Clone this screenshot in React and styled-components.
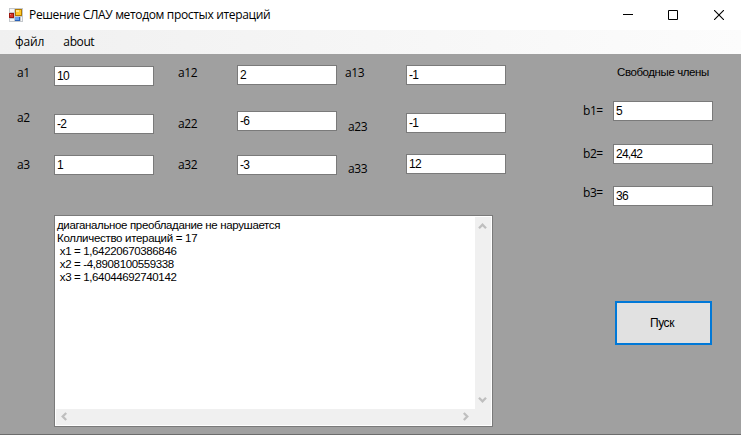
import React from "react";
import styled, { createGlobalStyle } from "styled-components";

const GlobalStyle = createGlobalStyle`
  * { box-sizing: border-box; }
  body { margin: 0; background: #a0a0a0; overflow: hidden; }
`;

const Window = styled.div`
  width: 741px;
  height: 435px;
  display: flex;
  flex-direction: column;
  background: #a0a0a0;
  border-bottom: 1px solid #6c6c6c;
  font: 11px/14px "Liberation Sans", Arial, sans-serif;
  color: #000;
  white-space: pre;
`;

const TitleBar = styled.header`
  height: 30px;
  flex: none;
  display: flex;
  align-items: center;
  background: #fff;
  padding-left: 9px;
`;

const Title = styled.span`
  flex: 1;
  margin-left: 6px;
  font: 12px/16px "Open Sans", "Noto Sans", sans-serif;
  letter-spacing: -0.34px;
`;

const WindowButtons = styled.div`
  display: flex;
  margin-right: -0.5px;
`;

const WindowButton = styled.span`
  width: 45.5px;
  height: 30px;
  display: flex;
  align-items: center;
  justify-content: center;
`;

const MenuBar = styled.nav`
  height: 24px;
  flex: none;
  display: flex;
  align-items: center;
  padding-left: 15px;
  gap: 19px;
  background: linear-gradient(90deg, #f0f0f0, #fcfcfc);
  font: 12px/16px "Open Sans", "Noto Sans", sans-serif;
`;

const MenuItem = styled.span`
  letter-spacing: ${(p) => p.$spacing}px;
`;

const Client = styled.main`
  flex: 1;
  display: flex;
`;

const System = styled.section`
  width: 583px;
  display: flex;
  flex-direction: column;
`;

const Matrix = styled.div`
  height: 161px;
  display: flex;
`;

const Labels = styled.div`
  width: ${(p) => p.$width}px;
  padding-left: ${(p) => p.$inset}px;
  flex: none;
`;

const Label = styled.label`
  display: block;
  height: 14px;
  margin-top: ${(p) => p.$gap}px;
  margin-left: ${(p) => p.$indent || 0}px;
  font: 12px/14px "Open Sans", "Noto Sans", sans-serif;
  letter-spacing: -0.45px;
`;

const Inputs = styled.div`
  width: 100px;
  flex: none;
`;

const Input = styled.input`
  display: block;
  width: 100px;
  height: 20px;
  margin: ${(p) => p.$gap}px 0 0;
  padding: 0 1px 0 2px;
  border: 1px solid #7a7a7a;
  border-radius: 0;
  background: #fff;
  color: #000;
  font: 12px/18px "Liberation Sans", Arial, sans-serif;
  letter-spacing: -0.75px;
  outline: none;
`;

const Output = styled.div`
  width: 439px;
  height: 212px;
  margin-left: 54px;
  padding: 1px;
  border: 1px solid #7a7a7a;
  background: #fff;
  display: grid;
  grid-template-columns: 1fr 16px;
  grid-template-rows: 1fr 16px;
`;

const OutputText = styled.div`
  padding: 2px 0 0 1px;
  font: 11.5px/13px "Liberation Sans", Arial, sans-serif;
`;

const Line = styled.div`
  letter-spacing: ${(p) => p.$spacing}px;
`;

const Scrollbar = styled.div`
  display: flex;
  flex-direction: ${(p) => (p.$vertical ? "column" : "row")};
  justify-content: space-between;
  align-items: center;
  background: #f0f0f0;
  padding: ${(p) => (p.$vertical ? "5px 1px 5px 0" : "0 5px 1px 4px")};
`;

const Corner = styled.div`
  background: #f0f0f0;
`;

const Constants = styled.section`
  width: 158px;
  display: flex;
  flex-direction: column;
`;

const Heading = styled.div`
  height: 14px;
  margin: 11px 0 0 34px;
  font-size: 11.5px;
  letter-spacing: -0.42px;
`;

const ConstantFields = styled.div`
  display: flex;
`;

const StartButton = styled.button`
  width: 97px;
  height: 44px;
  margin: 95px 0 0 32px;
  padding: 0 3px 0 0;
  border: 2px solid #0078d7;
  background: #e1e1e1;
  color: #000;
  font: 12px/14px "Liberation Sans", Arial, sans-serif;
  letter-spacing: -0.45px;
`;

const AppIcon = () => (
  <svg width="14" height="14" viewBox="0 0 14 14" shapeRendering="crispEdges">
    <path d="M0 0h14v14H0z" fill="#c4c8cc" />
    <path d="M1 1h4v3H1zM1 11h4v2H1zM12 9h1v4h-1z" fill="#f5f5f5" />
    <path d="M0 5h5v5H0z" fill="#9c1710" />
    <path d="M1 6h3v3H1z" fill="#d9382a" />
    <path d="M1 6h1v1H1z" fill="#f08b75" />
    <path d="M6 1h7v7H6z" fill="#b37b00" />
    <path d="M7 2h5v5H7z" fill="#ffc928" />
    <path d="M7 2h3v2H7z" fill="#ffe38b" />
    <path d="M6 9h5v4H6z" fill="#2860b8" />
    <path d="M6 9h4v3H6z" fill="#6ba4ef" />
  </svg>
);

const arrowTurn = { up: 0, right: 90, down: 180, left: 270 };
const Arrow = ({ dir }) => (
  <svg width="9" height="9" viewBox="0 0 9 9">
    <path
      d="M1 6.2 4.5 2.7 8 6.2"
      transform={`rotate(${arrowTurn[dir]} 4.5 4.5)`}
      fill="none"
      stroke="#bfbfbf"
      strokeWidth="2.3"
    />
  </svg>
);

const columns = [
  { width: 54, inset: 17, labels: [["a1", 12], ["a2", 31], ["a3", 33]], inputs: [["10", 12], ["-2", 28], ["1", 21]] },
  { width: 83, inset: 24, labels: [["a12", 12], ["a22", 37], ["a32", 27]], inputs: [["2", 11], ["-6", 26], ["-3", 24]] },
  { width: 69, inset: 8, labels: [["a13", 12], ["a23", 40, 3], ["a33", 28, 3]], inputs: [["-1", 11], ["-1", 28], ["12", 21]] },
];

const constants = {
  labels: [["b1=", 25], ["b2=", 29], ["b3=", 25]],
  inputs: [["5", 22], ["24,42", 23], ["36", 22]],
};

const lines = [
  ["диаганальное преобладание не нарушается", -0.36],
  ["Колличество итераций = 17", -0.3],
  [" x1 = 1,64220670386846", -0.37],
  [" x2 = -4,8908100559338", -0.37],
  [" x3 = 1,64044692740142", -0.37],
];

const FieldGroup = ({ width, inset, labels, inputs }) => (
  <>
    <Labels $width={width} $inset={inset}>
      {labels.map(([text, gap, indent]) => (
        <Label key={text} $gap={gap} $indent={indent}>{text}</Label>
      ))}
    </Labels>
    <Inputs>
      {inputs.map(([value, gap], i) => (
        <Input key={i} $gap={gap} defaultValue={value} aria-label={labels[i][0]} />
      ))}
    </Inputs>
  </>
);

export default function App() {
  return (
    <>
      <GlobalStyle />
      <Window>
        <TitleBar>
          <AppIcon />
          <Title>Решение СЛАУ методом простых итераций</Title>
          <WindowButtons>
            <WindowButton>
              <svg width="10" height="10"><path d="M0 4.5h10" stroke="#000" /></svg>
            </WindowButton>
            <WindowButton>
              <svg width="10" height="10"><path d="M.5.5h9v9h-9z" fill="none" stroke="#000" /></svg>
            </WindowButton>
            <WindowButton>
              <svg width="10" height="10"><path d="M0 0 10 10M10 0 0 10" stroke="#000" strokeWidth="1.1" /></svg>
            </WindowButton>
          </WindowButtons>
        </TitleBar>
        <MenuBar>
          <MenuItem $spacing={-0.1}>файл</MenuItem>
          <MenuItem $spacing={-0.4}>about</MenuItem>
        </MenuBar>
        <Client>
          <System>
            <Matrix>
              {columns.map((c) => <FieldGroup key={c.inset} {...c} />)}
            </Matrix>
            <Output>
              <OutputText>
                {lines.map(([text, spacing]) => <Line key={text} $spacing={spacing}>{text}</Line>)}
              </OutputText>
              <Scrollbar $vertical>
                <Arrow dir="up" />
                <Arrow dir="down" />
              </Scrollbar>
              <Scrollbar>
                <Arrow dir="left" />
                <Arrow dir="right" />
              </Scrollbar>
              <Corner />
            </Output>
          </System>
          <Constants>
            <Heading>Свободные члены</Heading>
            <ConstantFields>
              <FieldGroup width={30} inset={0} {...constants} />
            </ConstantFields>
            <StartButton>Пуск</StartButton>
          </Constants>
        </Client>
      </Window>
    </>
  );
}
